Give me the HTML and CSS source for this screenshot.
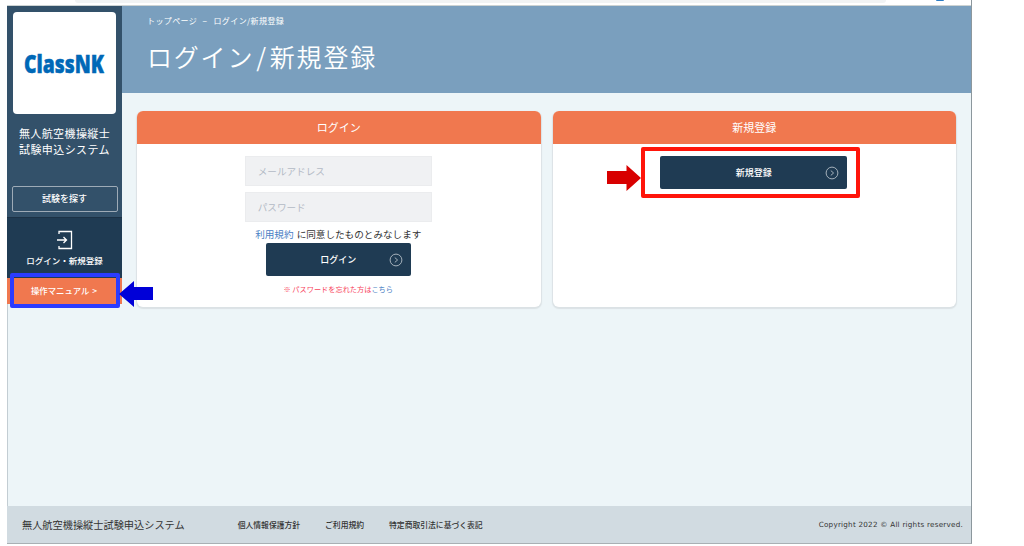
FILE: index.html
```html
<!DOCTYPE html>
<html lang="ja">
<head>
	<meta charset="UTF-8">
	<title>ログイン/新規登録</title>
	<link rel="stylesheet" href="styles.css">
</head>
<body>
	<div class="window">
		<div class="toolbar">
			<div class="address"></div>
			<div class="avatar"></div>
		</div>
		<div class="page">
			<div class="side">
				<div class="logo">
					<svg width="94" height="40" viewBox="0 0 94 40">
						<text x="6" y="29.500" textLength="80" lengthAdjust="spacingAndGlyphs">ClassNK</text>
					</svg>
				</div>
				<p class="side-title">無人航空機操縦士<br>試験申込システム</p>
				<a class="search">試験を探す</a>
				<a class="side-login">
					<svg width="18" height="20" viewBox="0 0 18 20">
						<path d="M3 4V1.500H15.500V18.500H3V16M1 10H10.500M7.500 7L10.500 10L7.500 13"/>
					</svg>
					<span>ログイン・新規登録</span>
				</a>
				<a class="manual">操作マニュアル &gt;</a>
			</div>
			<div class="main">
				<div class="head">
					<p class="crumb">トップページ <i>−</i> ログイン/新規登録</p>
					<h1>ログイン<i>/</i>新規登録</h1>
				</div>
				<div class="cards">
					<div class="card">
						<h2>ログイン</h2>
						<div class="card-body">
							<input class="field" type="text" placeholder="メールアドレス">
							<input class="field" type="password" placeholder="パスワード">
							<p class="terms"><a>利用規約</a> に同意したものとみなします</p>
							<button class="btn btn-login">ログイン
								<svg width="14" height="14" viewBox="0 0 14 14"><circle cx="7" cy="7" r="5.900"/><path d="M5.800 4.600L8.600 7L5.800 9.400"/></svg>
							</button>
							<p class="forgot">※ パスワードを忘れた方は<a>こちら</a></p>
						</div>
					</div>
					<div class="card">
						<h2>新規登録</h2>
						<div class="card-body">
							<button class="btn btn-new">新規登録
								<svg width="14" height="14" viewBox="0 0 14 14"><circle cx="7" cy="7" r="5.900"/><path d="M5.800 4.600L8.600 7L5.800 9.400"/></svg>
							</button>
						</div>
					</div>
				</div>
			</div>
		</div>
		<div class="footer">
			<span class="name">無人航空機操縦士試験申込システム</span>
			<a>個人情報保護方針</a>
			<a>ご利用規約</a>
			<a>特定商取引法に基づく表記</a>
			<span class="copy">Copyright 2022 © All rights reserved.</span>
		</div>
	</div>

	<!-- 説明用の枠と矢印 -->
	<div class="mark mark-blue"></div>
	<svg class="arrow arrow-blue" width="34" height="26" viewBox="0 0 34 26"><path d="M0 13L15 0V6H34V19H15V26Z"/></svg>
	<div class="mark mark-red"></div>
	<svg class="arrow arrow-red" width="34" height="26" viewBox="0 0 34 26"><path d="M34 13L19.500 0V6H0V19H19.500V26Z"/></svg>
</body>
</html>
```

FILE: styles.css
```css
*{
	margin: 0;
	padding: 0;
	box-sizing: border-box;
}
body{
	width: 1024px;
	height: 546px;
	overflow: hidden;
	background: #fff;
	color: #333;
	font-family: "Noto Sans CJK JP", sans-serif;
}
.window{
	display: flex;
	flex-direction: column;
	width: 965px;
	height: 544px;
	margin-left: 7px;
	border-right: 1px solid #8c979d;
	border-bottom: 1px solid #a9b0b4;
}
.toolbar{
	display: flex;
	justify-content: space-between;
	height: 6px;
	padding: 0 27px 0 68px;
	border-bottom: 1px solid #cdd3d3;
}
.address{
	width: 811px;
	height: 3px;
	background: #f1f3f4;
	border-radius: 0 0 12px 12px;
}
.avatar{
	width: 8px;
	height: 1px;
	background: #2c7cc4;
	border-radius: 0 0 4px 4px;
}
.page{
	display: flex;
	height: 500px;
	border-left: 1px solid #c3cdd3;
	background: #edf5f8;
}
/* side */
.side{
	display: flex;
	flex-direction: column;
	align-items: center;
	width: 115px;
	height: 298px;
	margin-left: -1px;
	background: #33516a;
	text-align: center;
	color: #fff;
}
.logo{
	display: flex;
	align-items: center;
	justify-content: center;
	width: 103px;
	height: 102px;
	margin-top: 6px;
	background: #fff;
	border-radius: 4px;
}
.logo text{
	font-family: "Open Sans", sans-serif;
	font-size: 25.500px;
	font-weight: 800;
	fill: #0068b7;
	stroke: #0068b7;
	stroke-width: .5;
}
.side-title{
	margin-top: 11px;
	font-size: 11px;
	line-height: 16px;
	letter-spacing: .4px;
}
.search{
	width: 106px;
	height: 26px;
	margin-top: 29px;
	border: 1px solid #9eabb7;
	border-radius: 2px;
	font-size: 9px;
	font-weight: 500;
	line-height: 23px;
}
.side-login{
	display: flex;
	flex-direction: column;
	align-items: center;
	width: 115px;
	height: 61px;
	margin-top: 5px;
	padding-top: 12px;
	border-top: 1px solid #1c3246;
	background: #1f3b53;
	font-size: 8.500px;
	font-weight: 500;
	line-height: 14px;
}
.side-login svg{
	margin: 0 0 3px 0;
	fill: none;
	stroke: #fff;
	stroke-width: 1.300;
}
.manual{
	width: 115px;
	height: 26px;
	padding-right: 1px;
	background: #f0784f;
	font-size: 8.400px;
	font-weight: 500;
	line-height: 25px;
	word-spacing: 1px;
}
/* main */
.main{
	flex: 1;
}
.head{
	height: 87px;
	padding: 8px 0 0 25px;
	background: #7a9fbe;
	color: #fff;
}
.crumb{
	font-size: 8px;
	line-height: 14px;
	letter-spacing: .4px;
}
.crumb i{
	margin: 0 4px 0 3px;
	font-style: normal;
}
h1{
	margin-top: 10px;
	font-size: 25px;
	font-weight: 350;
	line-height: 36px;
	letter-spacing: 1.800px;
}
h1 i{
	margin: 0 2px;
	font-style: normal;
}
.cards{
	display: flex;
	gap: 12px;
	padding: 18px 15px 0 15px;
}
.card{
	flex: 1;
	height: 196px;
	background: #fff;
	border-radius: 6px;
	box-shadow: 0 1px 1px 1px #dbe2e5;
	overflow: hidden;
}
h2{
	height: 33px;
	background: #f0784f;
	color: #fff;
	font-size: 11px;
	font-weight: 400;
	line-height: 32px;
	text-align: center;
}
.card-body{
	display: flex;
	flex-direction: column;
	align-items: center;
	padding: 12px 1px 0 0;
}
.field{
	width: 187px;
	height: 30px;
	margin-bottom: 6px;
	padding: 0 12px;
	border: 1px solid #ebecee;
	background: #f0f1f3;
	font-family: inherit;
	font-size: 9.600px;
}
.field::placeholder{
	color: #b3bac5;
}
.terms{
	margin: -1px 0 2px;
	font-size: 9.600px;
	line-height: 14px;
	word-spacing: 1px;
}
.terms a, .forgot a{
	color: #4a80c4;
}
.btn{
	position: relative;
	height: 33px;
	border: none;
	border-radius: 2px;
	background: #1f3b53;
	color: #fff;
	font-family: inherit;
	font-size: 9px;
	font-weight: 500;
	line-height: 30px;
}
.btn svg{
	position: absolute;
	top: 10px;
	right: 8px;
	fill: none;
	stroke: #a5b1bb;
}
.btn-login{
	width: 145px;
}
.btn-new{
	width: 187px;
}
.forgot{
	margin-top: 7px;
	color: #f8445c;
	font-size: 7.200px;
	line-height: 13px;
}
/* footer */
.footer{
	display: flex;
	align-items: center;
	height: 37px;
	padding: 0 8px 0 15px;
	background: #d1dbe1;
	font-size: 7.800px;
	white-space: nowrap;
}
.footer .name{
	margin-right: 53px;
	font-size: 10.200px;
}
.footer a{
	margin-right: 25px;
	font-weight: 500;
}
.footer .copy{
	margin-left: auto;
	font-family: "DejaVu Sans", sans-serif;
	font-size: 7.200px;
	letter-spacing: .24px;
}
/* marks */
.mark, .arrow{
	position: absolute;
}
.mark-blue{
	left: 10px;
	top: 273px;
	width: 110px;
	height: 35px;
	border: 4px solid #2b3cff;
	border-radius: 2px;
}
.mark-red{
	left: 641px;
	top: 147px;
	width: 219px;
	height: 51px;
	border: 4px solid #ff150a;
	border-radius: 2px;
}
.arrow-blue{
	left: 119px;
	top: 281px;
	fill: #0000d8;
}
.arrow-red{
	left: 607px;
	top: 165px;
	fill: #d80000;
}
```
